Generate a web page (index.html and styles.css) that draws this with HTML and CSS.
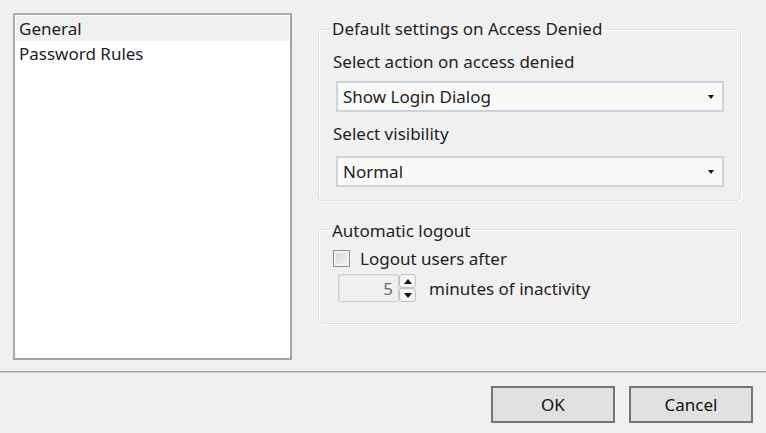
FILE: index.html
```html
<!DOCTYPE html>
<html lang="en">
<head>
    <meta charset="UTF-8">
    <title>Security Settings</title>
    <link rel="stylesheet" href="styles.css">
</head>
<body>
    <div class="dialog">
        <div class="main">
            <ul class="pages">
                <li class="selected">General</li>
                <li>Password Rules</li>
            </ul>
            <div class="settings">
                <fieldset class="group group-access">
                    <legend>Default settings on Access Denied</legend>
                    <div class="field-label">Select action on access denied</div>
                    <div class="combo">
                        <span>Show Login Dialog</span>
                        <span class="arrow"></span>
                    </div>
                    <div class="field-label">Select visibility</div>
                    <div class="combo combo-last">
                        <span>Normal</span>
                        <span class="arrow"></span>
                    </div>
                </fieldset>
                <fieldset class="group group-logout">
                    <legend>Automatic logout</legend>
                    <label class="check-row">
                        <span class="checkbox"></span>
                        <span>Logout users after</span>
                    </label>
                    <div class="spin-row">
                        <div class="spinner">
                            <div class="spin-value">5</div>
                            <div class="spin-buttons">
                                <span class="spin-btn"><span class="tri-up"></span></span>
                                <span class="spin-btn"><span class="tri-down"></span></span>
                            </div>
                        </div>
                        <span>minutes of inactivity</span>
                    </div>
                </fieldset>
            </div>
        </div>
        <div class="footer">
            <button>OK</button>
            <button>Cancel</button>
        </div>
    </div>
</body>
</html>
```

FILE: styles.css
```css
html, body {
    margin: 0;
    padding: 0;
    background: #f0f0f0;
}
body {
    font-family: "Noto Sans", "Open Sans", sans-serif;
    font-size: 17px;
    color: #1e1e1e;
    width: 766px;
    height: 433px;
    overflow: hidden;
}
.main {
    display: flex;
    padding: 13px 13px 0 13px;
    height: 345px;
}
.pages {
    list-style: none;
    margin: 0;
    padding: 1px;
    width: 273px;
    height: 341px;
    background: #fff;
    border: 2px solid #acacac;
    border-right-color: #a2a2a2;
    border-bottom-color: #a2a2a2;
}
.pages li {
    height: 25px;
    line-height: 25px;
    padding-left: 3px;
}
.pages li.selected {
    background: #f0f0f0;
}
.settings {
    margin-left: 26px;
    width: 423px;
}
.group {
    margin: 0;
    padding: 0 14px 0 14px;
    border: 1px solid #d7dfe6;
    border-radius: 4px;
    box-shadow: inset 1px 1px 0 #fff, 1px 1px 0 #fff;
}
.group legend {
    padding: 0 4px 0 2px;
    line-height: 22px;
    margin-left: -3px;
}
.group-access {
    margin-top: 5px;
    padding-bottom: 13px;
}
.group-logout {
    margin-top: 17px;
    padding-bottom: 21px;
}
.group-logout legend {
    position: relative;
    top: 2px;
}
.field-label {
    line-height: 22px;
    margin-top: 11px;
}
.combo {
    display: flex;
    align-items: center;
    justify-content: space-between;
    margin: 8px 2px 0 3px;
    height: 27px;
    padding: 0 8px 0 5px;
    background: #f9f9f8;
    border: 2px solid #c9d4e1;
}
.combo.combo-last {
    margin-top: 11px;
}
.arrow {
    width: 0;
    height: 0;
    border-left: 3px solid transparent;
    border-right: 3px solid transparent;
    border-top: 4px solid #111;
}
.check-row {
    display: flex;
    align-items: center;
    margin-top: 7px;
    height: 22px;
}
.checkbox {
    width: 15px;
    height: 15px;
    border: 1px solid #8e8f8f;
    background: linear-gradient(135deg, #d6d6d6, #f4f4f4);
    box-shadow: inset 0 0 0 2px #f4f4f4;
    margin-right: 10px;
}
.spin-row {
    display: flex;
    align-items: center;
    margin-top: 5px;
    margin-left: 5px;
}
.spinner {
    display: flex;
    height: 28px;
    margin-right: 13px;
}
.spin-value {
    width: 54px;
    height: 26px;
    line-height: 27px;
    text-align: right;
    padding-right: 5px;
    color: #6d6d6d;
    border: 1px solid #cfcfcf;
    border-radius: 2px;
    box-shadow: inset 1px 1px 0 #e3e3e3;
}
.spin-buttons {
    display: flex;
    flex-direction: column;
    width: 17px;
}
.spin-btn {
    flex: 1;
    display: flex;
    align-items: center;
    justify-content: center;
    border: 1px solid #c3c3c3;
    border-radius: 3px;
    background: #f4f4f4;
}
.tri-up, .tri-down {
    width: 0;
    height: 0;
    border-left: 4px solid transparent;
    border-right: 4px solid transparent;
}
.tri-up {
    border-bottom: 5px solid #111;
}
.tri-down {
    border-top: 5px solid #111;
}
.footer {
    margin-top: 13px;
    border-top: 1px solid #a0a0a0;
    box-shadow: inset 0 1px 0 #d4d4d4;
    padding: 14px 13px 0 0;
    display: flex;
    justify-content: flex-end;
    gap: 14px;
}
.footer button {
    width: 124px;
    height: 37px;
    font-family: "Noto Sans", "Open Sans", sans-serif;
    font-size: 17px;
    color: #111;
    background: #e1e1e1;
    border: 2px solid #767676;
    border-radius: 0;
}
```
